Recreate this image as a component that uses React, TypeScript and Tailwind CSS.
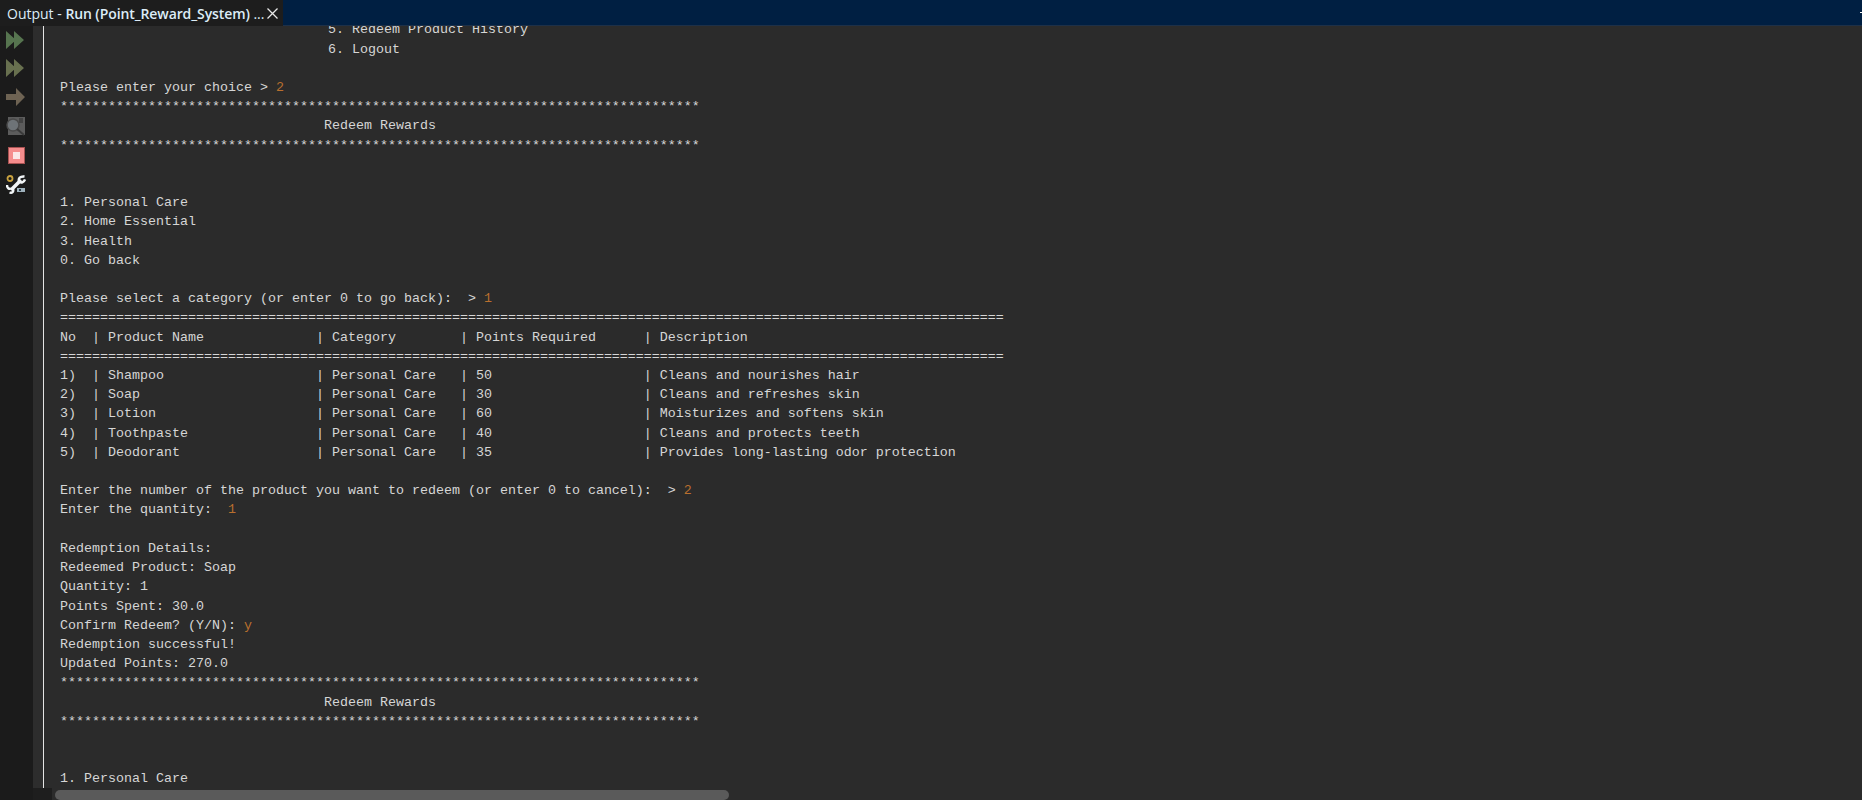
import React from "react";

const stars = "*".repeat(80);
const eq = "=".repeat(118);

function In({ children }: { children: React.ReactNode }) {
  return <span className="text-[#b96f2e]">{children}</span>;
}

function Sidebar() {
  return (
    <div className="w-[33px] shrink-0 bg-[#1b1b1b] flex flex-col items-start pl-[6px] pt-[4px]">
      <svg width="19" height="20" viewBox="0 0 19 20">
        <path d="M0 1 L10 10 L0 19Z M8 1 L18 10 L8 19Z" fill="#56744f" />
      </svg>
      <svg width="19" height="20" viewBox="0 0 19 20" className="mt-[8px]">
        <path d="M0 1 L10 10 L0 19Z M8 1 L18 10 L8 19Z" fill="#68704f" />
      </svg>
      <svg width="20" height="20" viewBox="0 0 20 20" className="mt-[9px]">
        <path d="M0 7 H10 V1 L19 10 L10 19 V13 H0Z" fill="#6e6353" />
      </svg>
      <svg width="20" height="20" viewBox="0 0 20 20" className="mt-[9px]">
        <rect x="2" y="1" width="17" height="18" fill="#5c5c5c" />
        <rect x="13" y="2" width="4" height="5" fill="#444" />
        <circle cx="7" cy="9" r="6" fill="#6e7377" stroke="#4a4a4a" strokeWidth="1.5" />
        <path d="M11 13 L18 19" stroke="#3a3a3a" strokeWidth="2" />
      </svg>
      <svg width="20" height="19" viewBox="0 0 20 19" className="mt-[10px]">
        <rect x="2.5" y="1.5" width="16" height="16" fill="#f58d8d" stroke="#a85252" />
        <rect x="7" y="6" width="7" height="7" fill="#fbe6e6" />
      </svg>
      <svg width="20" height="19" viewBox="0 0 20 19" className="mt-[10px]">
        <circle cx="4" cy="3.5" r="2.5" fill="none" stroke="#c9a23f" strokeWidth="1.8" />
        <path d="M15 5 L5 15" fill="none" stroke="#f2f5f7" strokeWidth="3.6" />
        <path d="M1 10 C1 13 3 14.5 5 13.5 M3.5 17.5 C6 18.5 8 16.5 7 14" fill="none" stroke="#f2f5f7" strokeWidth="2.4" />
        <path d="M18.5 1.5 C14 1 12 3.5 13 6.5 C15 8.5 18 7.5 19 4.5" fill="none" stroke="#f2f5f7" strokeWidth="2.4" />
        <rect x="11" y="13" width="8" height="4" fill="#9fb2bd" />
        <rect x="13" y="14" width="2" height="2" fill="#2c3a44" />
      </svg>
    </div>
  );
}

export default function App() {
  return (
    <div className="w-[1862px] h-[800px] overflow-hidden bg-[#2b2b2b] flex flex-col">
      <div className="h-[26px] shrink-0 flex bg-[#001f42] border-b border-[#1d3048]">
        <div
          className="w-[283px] h-[26px] shrink-0 bg-[#1d1d1d] flex items-center pl-[7px] pr-[3px] text-[14px] text-[#dcecf7] whitespace-pre"
          style={{ fontFamily: '"Open Sans", sans-serif' }}
        >
          <span>Output - </span>
          <span className="font-semibold tracking-[-0.1px]">Run (Point_Reward_System)</span>
          <span> ...</span>
          <svg width="13" height="13" viewBox="0 0 13 13" className="ml-[2px]">
            <path d="M1.5 1.5 L11.5 11.5 M11.5 1.5 L1.5 11.5" stroke="#e8e8e8" strokeWidth="1.3" />
          </svg>
        </div>
        <div className="flex-1 flex justify-end items-center">
          <div className="w-[2px] h-px bg-white" />
        </div>
      </div>
      <div className="flex flex-1 min-h-0">
        <Sidebar />
        <div className="flex-1 min-w-0 flex flex-col">
          <div className="flex-1 min-h-0 flex">
            <div className="w-[10px] shrink-0 bg-[#2d2d2d]" />
            <div className="w-px shrink-0 bg-[#e4e4e4]" />
            <div className="flex-1 min-w-0 overflow-hidden pl-[16px]">
              <pre
                className="-mt-[5.6px] text-[13.33px] leading-[19.2px] text-[#d6d6d6]"
                style={{ fontFamily: '"Liberation Mono", monospace' }}
              >
                {"                                 "}<span className="pl-[4px]">5. Redeem Product History</span>{"\n"}
                {"                                 "}<span className="pl-[4px]">6. Logout</span>{"\n"}
                {"\n"}
                Please enter your choice &gt; <In>2</In>{"\n"}
                {stars}{"\n"}
                {"                                 Redeem Rewards\n"}
                {stars}{"\n"}
                {"\n\n"}
                {"1. Personal Care\n2. Home Essential\n3. Health\n0. Go back\n\n"}
                Please select a category (or enter 0 to go back):  &gt; <In>1</In>{"\n"}
                {eq}{"\n"}
                {"No  | Product Name              | Category        | Points Required      | Description\n"}
                {eq}{"\n"}
                {"1)  | Shampoo                   | Personal Care   | 50                   | Cleans and nourishes hair\n"}
                {"2)  | Soap                      | Personal Care   | 30                   | Cleans and refreshes skin\n"}
                {"3)  | Lotion                    | Personal Care   | 60                   | Moisturizes and softens skin\n"}
                {"4)  | Toothpaste                | Personal Care   | 40                   | Cleans and protects teeth\n"}
                {"5)  | Deodorant                 | Personal Care   | 35                   | Provides long-lasting odor protection\n"}
                {"\n"}
                Enter the number of the product you want to redeem (or enter 0 to cancel):  &gt; <In>2</In>{"\n"}
                {"Enter the quantity:  "}<In>1</In>{"\n"}
                {"\n"}
                {"Redemption Details:\nRedeemed Product: Soap\nQuantity: 1\nPoints Spent: 30.0\n"}
                {"Confirm Redeem? (Y/N): "}<In>y</In>{"\n"}
                {"Redemption successful!\nUpdated Points: 270.0\n"}
                {stars}{"\n"}
                {"                                 Redeem Rewards\n"}
                {stars}{"\n"}
                {"\n\n"}
                {"1. Personal Care\n"}
              </pre>
            </div>
          </div>
          <div className="h-[12px] shrink-0 flex items-end bg-[#2b2b2b]">
            <div className="w-[19px] h-[12px] bg-[#1e1e1e] shrink-0" />
            <div className="ml-[3px] w-[674px] h-[10px] rounded-[5px] bg-[#5a5a5a]" />
          </div>
        </div>
      </div>
    </div>
  );
}
